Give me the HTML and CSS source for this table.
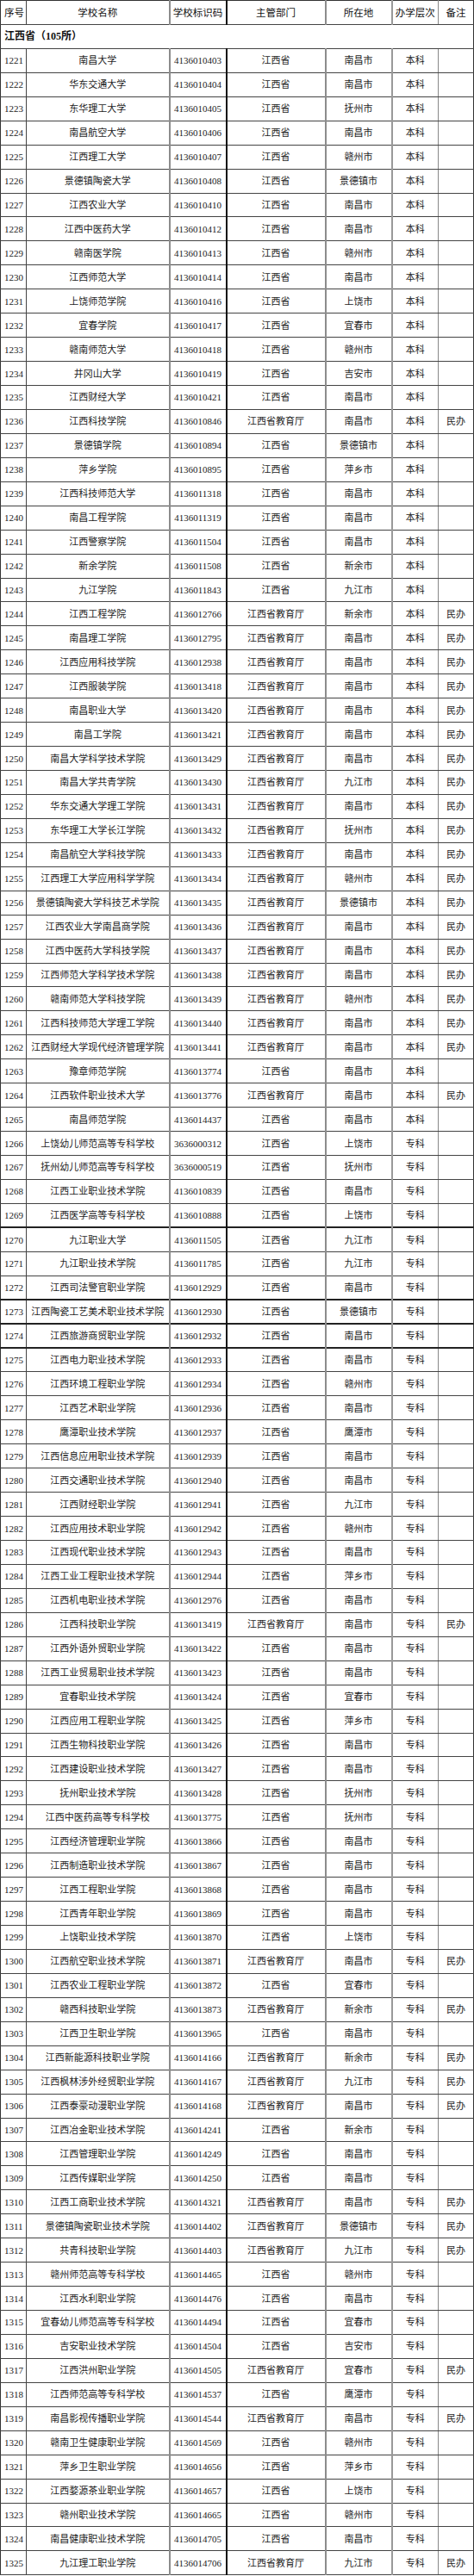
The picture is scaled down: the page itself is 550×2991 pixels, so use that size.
FILE: index.html
```html
<!DOCTYPE html>
<html lang="zh-CN">
<head>
<meta charset="utf-8">
<title>江西省高校名单</title>
<link rel="stylesheet" href="styles.css">
</head>
<body>
<table class="list">
<colgroup>
<col class="w1"><col class="w2"><col class="w3"><col class="w4"><col class="w5"><col class="w6"><col class="w7">
</colgroup>
<thead>
<tr class="head"><th class="seq">序号</th><th>学校名称</th><th>学校标识码</th><th>主管部门</th><th>所在地</th><th>办学层次</th><th>备注</th></tr>
</thead>
<tbody>
<tr class="section"><td colspan="7">江西省（105所）</td></tr>
<tr><td>1221</td><td>南昌大学</td><td>4136010403</td><td>江西省</td><td>南昌市</td><td>本科</td><td></td></tr>
<tr><td>1222</td><td>华东交通大学</td><td>4136010404</td><td>江西省</td><td>南昌市</td><td>本科</td><td></td></tr>
<tr><td>1223</td><td>东华理工大学</td><td>4136010405</td><td>江西省</td><td>抚州市</td><td>本科</td><td></td></tr>
<tr><td>1224</td><td>南昌航空大学</td><td>4136010406</td><td>江西省</td><td>南昌市</td><td>本科</td><td></td></tr>
<tr><td>1225</td><td>江西理工大学</td><td>4136010407</td><td>江西省</td><td>赣州市</td><td>本科</td><td></td></tr>
<tr><td>1226</td><td>景德镇陶瓷大学</td><td>4136010408</td><td>江西省</td><td>景德镇市</td><td>本科</td><td></td></tr>
<tr><td>1227</td><td>江西农业大学</td><td>4136010410</td><td>江西省</td><td>南昌市</td><td>本科</td><td></td></tr>
<tr><td>1228</td><td>江西中医药大学</td><td>4136010412</td><td>江西省</td><td>南昌市</td><td>本科</td><td></td></tr>
<tr><td>1229</td><td>赣南医学院</td><td>4136010413</td><td>江西省</td><td>赣州市</td><td>本科</td><td></td></tr>
<tr><td>1230</td><td>江西师范大学</td><td>4136010414</td><td>江西省</td><td>南昌市</td><td>本科</td><td></td></tr>
<tr><td>1231</td><td>上饶师范学院</td><td>4136010416</td><td>江西省</td><td>上饶市</td><td>本科</td><td></td></tr>
<tr><td>1232</td><td>宜春学院</td><td>4136010417</td><td>江西省</td><td>宜春市</td><td>本科</td><td></td></tr>
<tr><td>1233</td><td>赣南师范大学</td><td>4136010418</td><td>江西省</td><td>赣州市</td><td>本科</td><td></td></tr>
<tr><td>1234</td><td>井冈山大学</td><td>4136010419</td><td>江西省</td><td>吉安市</td><td>本科</td><td></td></tr>
<tr><td>1235</td><td>江西财经大学</td><td>4136010421</td><td>江西省</td><td>南昌市</td><td>本科</td><td></td></tr>
<tr><td>1236</td><td>江西科技学院</td><td>4136010846</td><td>江西省教育厅</td><td>南昌市</td><td>本科</td><td>民办</td></tr>
<tr><td>1237</td><td>景德镇学院</td><td>4136010894</td><td>江西省</td><td>景德镇市</td><td>本科</td><td></td></tr>
<tr><td>1238</td><td>萍乡学院</td><td>4136010895</td><td>江西省</td><td>萍乡市</td><td>本科</td><td></td></tr>
<tr><td>1239</td><td>江西科技师范大学</td><td>4136011318</td><td>江西省</td><td>南昌市</td><td>本科</td><td></td></tr>
<tr><td>1240</td><td>南昌工程学院</td><td>4136011319</td><td>江西省</td><td>南昌市</td><td>本科</td><td></td></tr>
<tr><td>1241</td><td>江西警察学院</td><td>4136011504</td><td>江西省</td><td>南昌市</td><td>本科</td><td></td></tr>
<tr><td>1242</td><td>新余学院</td><td>4136011508</td><td>江西省</td><td>新余市</td><td>本科</td><td></td></tr>
<tr><td>1243</td><td>九江学院</td><td>4136011843</td><td>江西省</td><td>九江市</td><td>本科</td><td></td></tr>
<tr><td>1244</td><td>江西工程学院</td><td>4136012766</td><td>江西省教育厅</td><td>新余市</td><td>本科</td><td>民办</td></tr>
<tr><td>1245</td><td>南昌理工学院</td><td>4136012795</td><td>江西省教育厅</td><td>南昌市</td><td>本科</td><td>民办</td></tr>
<tr><td>1246</td><td>江西应用科技学院</td><td>4136012938</td><td>江西省教育厅</td><td>南昌市</td><td>本科</td><td>民办</td></tr>
<tr><td>1247</td><td>江西服装学院</td><td>4136013418</td><td>江西省教育厅</td><td>南昌市</td><td>本科</td><td>民办</td></tr>
<tr><td>1248</td><td>南昌职业大学</td><td>4136013420</td><td>江西省教育厅</td><td>南昌市</td><td>本科</td><td>民办</td></tr>
<tr><td>1249</td><td>南昌工学院</td><td>4136013421</td><td>江西省教育厅</td><td>南昌市</td><td>本科</td><td>民办</td></tr>
<tr><td>1250</td><td>南昌大学科学技术学院</td><td>4136013429</td><td>江西省教育厅</td><td>南昌市</td><td>本科</td><td>民办</td></tr>
<tr><td>1251</td><td>南昌大学共青学院</td><td>4136013430</td><td>江西省教育厅</td><td>九江市</td><td>本科</td><td>民办</td></tr>
<tr><td>1252</td><td>华东交通大学理工学院</td><td>4136013431</td><td>江西省教育厅</td><td>南昌市</td><td>本科</td><td>民办</td></tr>
<tr><td>1253</td><td>东华理工大学长江学院</td><td>4136013432</td><td>江西省教育厅</td><td>抚州市</td><td>本科</td><td>民办</td></tr>
<tr><td>1254</td><td>南昌航空大学科技学院</td><td>4136013433</td><td>江西省教育厅</td><td>南昌市</td><td>本科</td><td>民办</td></tr>
<tr><td>1255</td><td>江西理工大学应用科学学院</td><td>4136013434</td><td>江西省教育厅</td><td>赣州市</td><td>本科</td><td>民办</td></tr>
<tr><td>1256</td><td>景德镇陶瓷大学科技艺术学院</td><td>4136013435</td><td>江西省教育厅</td><td>景德镇市</td><td>本科</td><td>民办</td></tr>
<tr><td>1257</td><td>江西农业大学南昌商学院</td><td>4136013436</td><td>江西省教育厅</td><td>南昌市</td><td>本科</td><td>民办</td></tr>
<tr><td>1258</td><td>江西中医药大学科技学院</td><td>4136013437</td><td>江西省教育厅</td><td>南昌市</td><td>本科</td><td>民办</td></tr>
<tr><td>1259</td><td>江西师范大学科学技术学院</td><td>4136013438</td><td>江西省教育厅</td><td>南昌市</td><td>本科</td><td>民办</td></tr>
<tr><td>1260</td><td>赣南师范大学科技学院</td><td>4136013439</td><td>江西省教育厅</td><td>赣州市</td><td>本科</td><td>民办</td></tr>
<tr><td>1261</td><td>江西科技师范大学理工学院</td><td>4136013440</td><td>江西省教育厅</td><td>南昌市</td><td>本科</td><td>民办</td></tr>
<tr><td>1262</td><td>江西财经大学现代经济管理学院</td><td>4136013441</td><td>江西省教育厅</td><td>南昌市</td><td>本科</td><td>民办</td></tr>
<tr><td>1263</td><td>豫章师范学院</td><td>4136013774</td><td>江西省</td><td>南昌市</td><td>本科</td><td></td></tr>
<tr><td>1264</td><td>江西软件职业技术大学</td><td>4136013776</td><td>江西省教育厅</td><td>南昌市</td><td>本科</td><td>民办</td></tr>
<tr><td>1265</td><td>南昌师范学院</td><td>4136014437</td><td>江西省</td><td>南昌市</td><td>本科</td><td></td></tr>
<tr><td>1266</td><td>上饶幼儿师范高等专科学校</td><td>3636000312</td><td>江西省</td><td>上饶市</td><td>专科</td><td></td></tr>
<tr><td>1267</td><td>抚州幼儿师范高等专科学校</td><td>3636000519</td><td>江西省</td><td>抚州市</td><td>专科</td><td></td></tr>
<tr><td>1268</td><td>江西工业职业技术学院</td><td>4136010839</td><td>江西省</td><td>南昌市</td><td>专科</td><td></td></tr>
<tr><td>1269</td><td>江西医学高等专科学校</td><td>4136010888</td><td>江西省</td><td>上饶市</td><td>专科</td><td></td></tr>
<tr class="thick"><td>1270</td><td>九江职业大学</td><td>4136011505</td><td>江西省</td><td>九江市</td><td>专科</td><td></td></tr>
<tr><td>1271</td><td>九江职业技术学院</td><td>4136011785</td><td>江西省</td><td>九江市</td><td>专科</td><td></td></tr>
<tr><td>1272</td><td>江西司法警官职业学院</td><td>4136012929</td><td>江西省</td><td>南昌市</td><td>专科</td><td></td></tr>
<tr class="thick"><td>1273</td><td>江西陶瓷工艺美术职业技术学院</td><td>4136012930</td><td>江西省</td><td>景德镇市</td><td>专科</td><td></td></tr>
<tr class="thick"><td>1274</td><td>江西旅游商贸职业学院</td><td>4136012932</td><td>江西省</td><td>南昌市</td><td>专科</td><td></td></tr>
<tr class="thick"><td>1275</td><td>江西电力职业技术学院</td><td>4136012933</td><td>江西省</td><td>南昌市</td><td>专科</td><td></td></tr>
<tr><td>1276</td><td>江西环境工程职业学院</td><td>4136012934</td><td>江西省</td><td>赣州市</td><td>专科</td><td></td></tr>
<tr><td>1277</td><td>江西艺术职业学院</td><td>4136012936</td><td>江西省</td><td>南昌市</td><td>专科</td><td></td></tr>
<tr><td>1278</td><td>鹰潭职业技术学院</td><td>4136012937</td><td>江西省</td><td>鹰潭市</td><td>专科</td><td></td></tr>
<tr><td>1279</td><td>江西信息应用职业技术学院</td><td>4136012939</td><td>江西省</td><td>南昌市</td><td>专科</td><td></td></tr>
<tr><td>1280</td><td>江西交通职业技术学院</td><td>4136012940</td><td>江西省</td><td>南昌市</td><td>专科</td><td></td></tr>
<tr><td>1281</td><td>江西财经职业学院</td><td>4136012941</td><td>江西省</td><td>九江市</td><td>专科</td><td></td></tr>
<tr><td>1282</td><td>江西应用技术职业学院</td><td>4136012942</td><td>江西省</td><td>赣州市</td><td>专科</td><td></td></tr>
<tr><td>1283</td><td>江西现代职业技术学院</td><td>4136012943</td><td>江西省</td><td>南昌市</td><td>专科</td><td></td></tr>
<tr><td>1284</td><td>江西工业工程职业技术学院</td><td>4136012944</td><td>江西省</td><td>萍乡市</td><td>专科</td><td></td></tr>
<tr><td>1285</td><td>江西机电职业技术学院</td><td>4136012976</td><td>江西省</td><td>南昌市</td><td>专科</td><td></td></tr>
<tr><td>1286</td><td>江西科技职业学院</td><td>4136013419</td><td>江西省教育厅</td><td>南昌市</td><td>专科</td><td>民办</td></tr>
<tr><td>1287</td><td>江西外语外贸职业学院</td><td>4136013422</td><td>江西省</td><td>南昌市</td><td>专科</td><td></td></tr>
<tr><td>1288</td><td>江西工业贸易职业技术学院</td><td>4136013423</td><td>江西省</td><td>南昌市</td><td>专科</td><td></td></tr>
<tr><td>1289</td><td>宜春职业技术学院</td><td>4136013424</td><td>江西省</td><td>宜春市</td><td>专科</td><td></td></tr>
<tr><td>1290</td><td>江西应用工程职业学院</td><td>4136013425</td><td>江西省</td><td>萍乡市</td><td>专科</td><td></td></tr>
<tr><td>1291</td><td>江西生物科技职业学院</td><td>4136013426</td><td>江西省</td><td>南昌市</td><td>专科</td><td></td></tr>
<tr><td>1292</td><td>江西建设职业技术学院</td><td>4136013427</td><td>江西省</td><td>南昌市</td><td>专科</td><td></td></tr>
<tr><td>1293</td><td>抚州职业技术学院</td><td>4136013428</td><td>江西省</td><td>抚州市</td><td>专科</td><td></td></tr>
<tr><td>1294</td><td>江西中医药高等专科学校</td><td>4136013775</td><td>江西省</td><td>抚州市</td><td>专科</td><td></td></tr>
<tr><td>1295</td><td>江西经济管理职业学院</td><td>4136013866</td><td>江西省</td><td>南昌市</td><td>专科</td><td></td></tr>
<tr><td>1296</td><td>江西制造职业技术学院</td><td>4136013867</td><td>江西省</td><td>南昌市</td><td>专科</td><td></td></tr>
<tr><td>1297</td><td>江西工程职业学院</td><td>4136013868</td><td>江西省</td><td>南昌市</td><td>专科</td><td></td></tr>
<tr><td>1298</td><td>江西青年职业学院</td><td>4136013869</td><td>江西省</td><td>南昌市</td><td>专科</td><td></td></tr>
<tr><td>1299</td><td>上饶职业技术学院</td><td>4136013870</td><td>江西省</td><td>上饶市</td><td>专科</td><td></td></tr>
<tr><td>1300</td><td>江西航空职业技术学院</td><td>4136013871</td><td>江西省教育厅</td><td>南昌市</td><td>专科</td><td>民办</td></tr>
<tr><td>1301</td><td>江西农业工程职业学院</td><td>4136013872</td><td>江西省</td><td>宜春市</td><td>专科</td><td></td></tr>
<tr><td>1302</td><td>赣西科技职业学院</td><td>4136013873</td><td>江西省教育厅</td><td>新余市</td><td>专科</td><td>民办</td></tr>
<tr><td>1303</td><td>江西卫生职业学院</td><td>4136013965</td><td>江西省</td><td>南昌市</td><td>专科</td><td></td></tr>
<tr><td>1304</td><td>江西新能源科技职业学院</td><td>4136014166</td><td>江西省教育厅</td><td>新余市</td><td>专科</td><td>民办</td></tr>
<tr><td>1305</td><td>江西枫林涉外经贸职业学院</td><td>4136014167</td><td>江西省教育厅</td><td>九江市</td><td>专科</td><td>民办</td></tr>
<tr><td>1306</td><td>江西泰豪动漫职业学院</td><td>4136014168</td><td>江西省教育厅</td><td>南昌市</td><td>专科</td><td>民办</td></tr>
<tr><td>1307</td><td>江西冶金职业技术学院</td><td>4136014241</td><td>江西省</td><td>新余市</td><td>专科</td><td></td></tr>
<tr><td>1308</td><td>江西管理职业学院</td><td>4136014249</td><td>江西省</td><td>南昌市</td><td>专科</td><td></td></tr>
<tr><td>1309</td><td>江西传媒职业学院</td><td>4136014250</td><td>江西省</td><td>南昌市</td><td>专科</td><td></td></tr>
<tr><td>1310</td><td>江西工商职业技术学院</td><td>4136014321</td><td>江西省教育厅</td><td>南昌市</td><td>专科</td><td>民办</td></tr>
<tr><td>1311</td><td>景德镇陶瓷职业技术学院</td><td>4136014402</td><td>江西省教育厅</td><td>景德镇市</td><td>专科</td><td>民办</td></tr>
<tr><td>1312</td><td>共青科技职业学院</td><td>4136014403</td><td>江西省教育厅</td><td>九江市</td><td>专科</td><td>民办</td></tr>
<tr><td>1313</td><td>赣州师范高等专科学校</td><td>4136014465</td><td>江西省</td><td>赣州市</td><td>专科</td><td></td></tr>
<tr><td>1314</td><td>江西水利职业学院</td><td>4136014476</td><td>江西省</td><td>南昌市</td><td>专科</td><td></td></tr>
<tr><td>1315</td><td>宜春幼儿师范高等专科学校</td><td>4136014494</td><td>江西省</td><td>宜春市</td><td>专科</td><td></td></tr>
<tr><td>1316</td><td>吉安职业技术学院</td><td>4136014504</td><td>江西省</td><td>吉安市</td><td>专科</td><td></td></tr>
<tr><td>1317</td><td>江西洪州职业学院</td><td>4136014505</td><td>江西省教育厅</td><td>宜春市</td><td>专科</td><td>民办</td></tr>
<tr><td>1318</td><td>江西师范高等专科学校</td><td>4136014537</td><td>江西省</td><td>鹰潭市</td><td>专科</td><td></td></tr>
<tr><td>1319</td><td>南昌影视传播职业学院</td><td>4136014544</td><td>江西省教育厅</td><td>南昌市</td><td>专科</td><td>民办</td></tr>
<tr><td>1320</td><td>赣南卫生健康职业学院</td><td>4136014569</td><td>江西省</td><td>赣州市</td><td>专科</td><td></td></tr>
<tr><td>1321</td><td>萍乡卫生职业学院</td><td>4136014656</td><td>江西省</td><td>萍乡市</td><td>专科</td><td></td></tr>
<tr><td>1322</td><td>江西婺源茶业职业学院</td><td>4136014657</td><td>江西省</td><td>上饶市</td><td>专科</td><td></td></tr>
<tr><td>1323</td><td>赣州职业技术学院</td><td>4136014665</td><td>江西省</td><td>赣州市</td><td>专科</td><td></td></tr>
<tr><td>1324</td><td>南昌健康职业技术学院</td><td>4136014705</td><td>江西省</td><td>南昌市</td><td>专科</td><td></td></tr>
<tr><td>1325</td><td>九江理工职业学院</td><td>4136014706</td><td>江西省教育厅</td><td>九江市</td><td>专科</td><td>民办</td></tr>
</tbody>
</table>
</body>
</html>
```
FILE: styles.css
```css
html, body {
  margin: 0;
  padding: 0;
  background: #ffffff;
}

.list {
  width: 549px;
  table-layout: fixed;
  border-collapse: collapse;
  font-family: "Liberation Serif", "Noto Sans CJK SC", serif;
  font-size: 11px;
  color: #222222;
  border-left: 1px solid #333333;
  border-right: 1px solid #333333;
  border-top: 1px solid #333333;
}

.w1 { width: 30px; }
.w2 { width: 166px; }
.w3 { width: 66px; }
.w4 { width: 115px; }
.w5 { width: 77px; }
.w6 { width: 54px; }
.w7 { width: 41px; }

.list tr {
  height: 27.95px;
}

.list th,
.list td {
  padding: 0;
  text-align: center;
  vertical-align: middle;
  white-space: nowrap;
  overflow: hidden;
  border-bottom: 1px solid #444444;
  line-height: 14px;
}

.list th {
  font-weight: normal;
  font-size: 11.5px;
  color: #111111;
  font-family: "Noto Sans CJK SC", sans-serif;
}

.list th:nth-child(1),
.list td:nth-child(1) {
  text-align: left;
  padding-left: 4px;
  border-right: 1px solid #444444;
}

.list th:nth-child(2),
.list td:nth-child(2) {
  border-right: 2px solid #8c8c8c;
}

.list th:nth-child(3),
.list td:nth-child(3) {
  border-right: 2px solid #111111;
}

.list th:nth-child(4),
.list td:nth-child(4) {
  border-right: 2px solid #8c8c8c;
}

.list th:nth-child(5),
.list td:nth-child(5) {
  border-right: 2px solid #999999;
}

.list th:nth-child(6),
.list td:nth-child(6) {
  border-right: 1px solid #888888;
}

.list .section td {
  text-align: left;
  padding-left: 4px;
  font-size: 12px;
  font-weight: bold;
  color: #111111;
  border-right: 1px solid #333333;
}

.list tr.thick td {
  border-top: 2px solid #222222;
}
```
